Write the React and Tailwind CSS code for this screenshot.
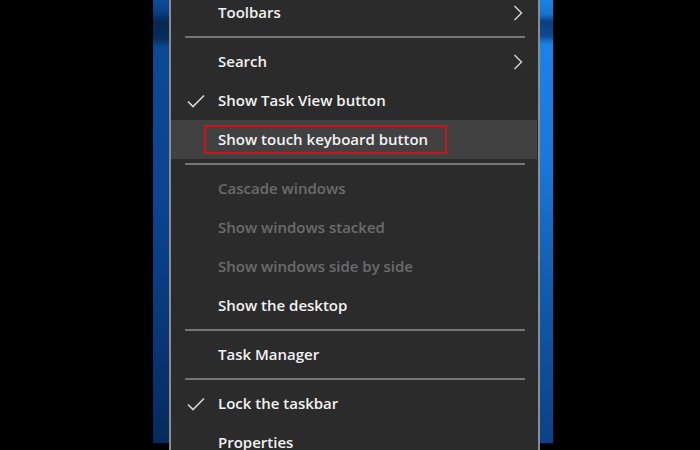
import React from "react";

const Check = () => (
  <svg width="20" height="16" viewBox="0 0 20 16" className="absolute left-[186px]">
    <path d="M2 8.5 L7 13.5 L18 2.5" fill="none" stroke="#d6d6d6" strokeWidth="1.6" />
  </svg>
);

const Chevron = () => (
  <svg width="12" height="16" viewBox="0 0 12 16" className="absolute left-[512px]">
    <path d="M2.5 1 L9.5 8 L2.5 15" fill="none" stroke="#cfcfcf" strokeWidth="1.6" />
  </svg>
);

function Row({ label, check, chevron, disabled, highlight, boxed }) {
  return (
    <div
      className={
        "relative h-[39px] flex items-center " +
        (highlight ? "bg-[#414141] mr-[1px]" : "")
      }
    >
      {check && (
        <div className="absolute left-[15px] top-0 h-full flex items-center">
          <svg width="20" height="16" viewBox="0 0 20 16">
            <path d="M2 8.5 L7 13.5 L18 2.5" fill="none" stroke="#d6d6d6" strokeWidth="1.6" />
          </svg>
        </div>
      )}
      {boxed && (
        <div className="absolute left-[33px] top-[5px] w-[243px] h-[29px] border-2 border-[#d0121b]" />
      )}
      <span
        className={
          "relative ml-[47px] text-[15px] font-semibold leading-none " +
          (disabled ? "text-[#6b6b6b]" : "text-[#f2f2f2]")
        }
      >
        {label}
      </span>
      {chevron && (
        <div className="absolute left-[341px] top-0 h-full flex items-center">
          <svg width="12" height="16" viewBox="0 0 12 16">
            <path d="M2.5 1 L9.5 8 L2.5 15" fill="none" stroke="#cfcfcf" strokeWidth="1.5" />
          </svg>
        </div>
      )}
    </div>
  );
}

const Sep = () => (
  <div className="h-[10px] flex items-center pl-[14px] pr-[13px]">
    <div className="h-[2px] w-full bg-[#767676]" />
  </div>
);

export default function App() {
  return (
    <div
      className="w-[700px] h-[450px] overflow-hidden bg-black flex"
      style={{ fontFamily: '"Open Sans", "Noto Sans", Arial, sans-serif' }}
    >
      <div className="w-[153px] shrink-0" />
      <div className="w-[16px] h-[443px] shrink-0 bg-[linear-gradient(to_bottom,#0b4c9c_0px,#0a3f85_12px,#062852_22px,#072c5c_38px,#0b4a96_48px,#0a4590_200px,#08377a_330px,#072a5c_443px)]" />
      <div className="w-[2px] h-full shrink-0 bg-[#8c8c8c]" />
      <div className="w-[367px] h-full shrink-0 bg-[#2b2b2b] flex flex-col">
        <div className="-mt-[7px] flex flex-col">
          <Row label="Toolbars" chevron />
          <Sep />
          <Row label="Search" chevron />
          <Row label="Show Task View button" check />
          <Row label="Show touch keyboard button" highlight boxed />
          <Sep />
          <Row label="Cascade windows" disabled />
          <Row label="Show windows stacked" disabled />
          <Row label="Show windows side by side" disabled />
          <Row label="Show the desktop" />
          <Sep />
          <Row label="Task Manager" />
          <Sep />
          <Row label="Lock the taskbar" check />
          <Row label="Properties" />
        </div>
      </div>
      <div className="w-[2px] h-full shrink-0 bg-[#8c8c8c]" />
      <div className="w-[13px] h-[443px] shrink-0 bg-[linear-gradient(to_bottom,#1a82ea_0px,#1673d0_14px,#0b3f80_22px,#0d4a90_36px,#1a82ea_44px,#1878dc_160px,#0f5aaa_300px,#0a4288_443px)]" />
      <div className="flex-1" />
    </div>
  );
}
